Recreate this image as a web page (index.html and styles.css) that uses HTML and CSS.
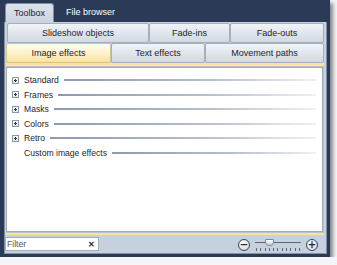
FILE: index.html
```html
<!DOCTYPE html>
<html lang="en">

<head>
	<meta charset="UTF-8">
	<title>Toolbox</title>
	<link rel="stylesheet" href="styles.css">
</head>

<body>
	<div class="window">
		<div class="top-tabs">
			<div class="top-tab active">Toolbox</div>
			<div class="top-tab">File browser</div>
		</div>
		<div class="panel">
			<div class="tab-row row-1">
				<div class="tab">Slideshow objects</div>
				<div class="tab">Fade-ins</div>
				<div class="tab">Fade-outs</div>
			</div>
			<div class="tab-row row-2">
				<div class="tab selected">Image effects</div>
				<div class="tab">Text effects</div>
				<div class="tab">Movement paths</div>
			</div>
			<div class="content">
				<div class="list">
					<div class="group"><span class="expander"></span><span class="label">Standard</span><span class="rule"></span></div>
					<div class="group"><span class="expander"></span><span class="label">Frames</span><span class="rule"></span></div>
					<div class="group"><span class="expander"></span><span class="label">Masks</span><span class="rule"></span></div>
					<div class="group"><span class="expander"></span><span class="label">Colors</span><span class="rule"></span></div>
					<div class="group"><span class="expander"></span><span class="label">Retro</span><span class="rule"></span></div>
					<div class="group"><span class="expander blank"></span><span class="label">Custom image effects</span><span class="rule"></span></div>
				</div>
			</div>
			<div class="bottom-bar">
				<div class="filter">
					<span class="filter-text">Filter</span>
					<span class="clear">&#x2715;</span>
				</div>
				<div class="zoom">
					<span class="zoom-btn">&minus;</span>
					<div class="slider">
						<div class="track"></div>
						<div class="thumb"></div>
						<div class="ticks">
							<i></i><i></i><i></i><i></i><i></i><i></i><i></i><i></i><i></i><i></i><i></i>
						</div>
					</div>
					<span class="zoom-btn">+</span>
				</div>
			</div>
		</div>
	</div>
</body>

</html>
```

FILE: styles.css
```css
body {
	margin: 0;
	background: #f4f5f7;
	font-family: 'Liberation Sans', Arial, sans-serif;
	font-size: 8.6px;
	color: #1c2433;
}

.window {
	width: 330px;
	height: 257px;
	box-sizing: border-box;
	background: #2b3b57;
	padding: 0 3px 3px 4px;
	display: flex;
	flex-direction: column;
	box-shadow: 3px 3px 4px rgba(0, 0, 0, 0.45);
}

.top-tabs {
	height: 22px;
	display: flex;
	align-items: flex-end;
	gap: 4px;
	padding-left: 1px;
}

.top-tab {
	height: 19px;
	line-height: 19px;
	padding: 0 8px;
	color: #fff;
	font-size: 9px;
}

.top-tab.active {
	background: linear-gradient(#dde3ec, #cbd4e0);
	color: #1c2433;
	border: 1px solid #7f8ea6;
	border-bottom: none;
	border-radius: 3px 3px 0 0;
	height: 18px;
}

.panel {
	flex: 1;
	background: #c7d1de;
	border: 1px solid #8290a6;
	border-top: none;
	padding: 1px 2px 0 1px;
	display: flex;
	flex-direction: column;
}

.tab-row {
	display: grid;
	height: 20px;
}

.row-1 {
	grid-template-columns: 142px 81px 94px;
	padding-left: 1px;
}

.row-2 {
	grid-template-columns: 105px 94px 119px;
}

.tab {
	border: 1px solid #a4afc0;
	border-radius: 2px;
	background: linear-gradient(#f1f3f6, #dfe4eb 55%, #d3d9e2);
	text-align: center;
	line-height: 18px;
	font-size: 9px;
}

.tab.selected {
	background: linear-gradient(#fffdf4, #fdf0c6 55%, #fbe3a0);
	border-color: #d8c48c;
}

.content {
	border-top: 3px solid #fbe19e;
	border-bottom: 2px solid #fbe19e;
	background: #b8c3d2;
	padding: 1px 1px 1px 0;
}

.list {
	height: 165px;
	box-sizing: border-box;
	background: #fff;
	border: 1px solid #a0abbb;
	padding: 5px 4px 0 5px;
}

.group {
	display: flex;
	align-items: center;
	height: 14.5px;
}

.expander {
	width: 5px;
	height: 5px;
	border: 1px solid #8b97aa;
	background: linear-gradient(#ffffff, #dfe4ea);
	position: relative;
	margin-right: 5px;
	flex: none;
}

.expander::before {
	content: '';
	position: absolute;
	left: 1px;
	top: 2px;
	width: 3px;
	height: 1px;
	background: #2a3447;
}

.expander::after {
	content: '';
	position: absolute;
	left: 2px;
	top: 1px;
	width: 1px;
	height: 3px;
	background: #2a3447;
}

.expander.blank {
	border-color: transparent;
	background: none;
}

.expander.blank::before,
.expander.blank::after {
	display: none;
}

.label {
	flex: none;
	margin-right: 5px;
}

.rule {
	flex: 1;
	height: 2px;
	margin-right: 2px;
	background: linear-gradient(to right, #8d99ad, #b9c1cd 60%, #eef0f4);
}

.bottom-bar {
	flex: 1;
	display: flex;
	align-items: center;
	justify-content: space-between;
	padding-right: 6px;
}

.filter {
	width: 94px;
	height: 14px;
	box-sizing: border-box;
	background: #fff;
	border: 1px solid #a3aebe;
	display: flex;
	align-items: center;
	justify-content: space-between;
	padding: 0 3px 0 1px;
	margin-left: -1px;
}

.filter-text {
	color: #4a5568;
}

.clear {
	font-size: 8px;
	font-weight: bold;
	color: #2a3040;
}

.zoom {
	display: flex;
	align-items: center;
	gap: 2px;
	margin-top: 2px;
}

.zoom-btn {
	width: 10px;
	height: 10px;
	border-radius: 50%;
	border: 1px solid #3a4354;
	background: radial-gradient(circle at 40% 35%, #ffffff, #c9cfd8);
	font-family: 'DejaVu Sans', sans-serif;
	font-weight: bold;
	font-size: 10px;
	line-height: 10px;
	text-align: center;
	color: #1e2430;
}

.slider {
	width: 52px;
	height: 16px;
	position: relative;
}

.track {
	position: absolute;
	left: 3px;
	right: 3px;
	top: 5px;
	height: 1px;
	background: #5c6678;
}

.thumb {
	position: absolute;
	left: 13px;
	top: 2px;
	width: 7px;
	height: 5px;
	background: linear-gradient(#ffffff, #c8ced7);
	border: 1px solid #7d889a;
	border-radius: 1px 1px 4px 4px;
}

.ticks {
	position: absolute;
	left: 4px;
	right: 4px;
	top: 11px;
	display: flex;
	justify-content: space-between;
}

.ticks i {
	width: 1px;
	height: 3px;
	background: #5c6678;
}
```
